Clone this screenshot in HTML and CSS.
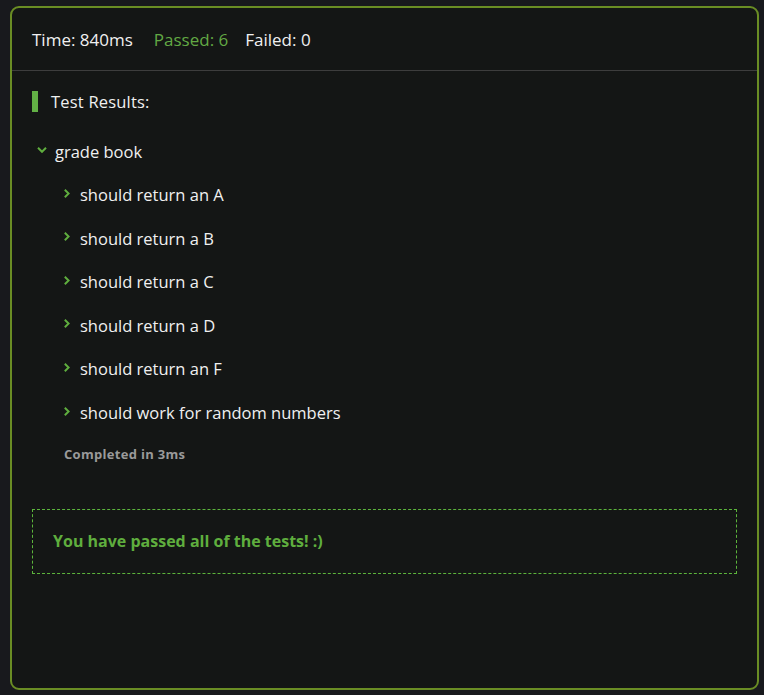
FILE: index.html
```html
<!DOCTYPE html>
<html>
<head>
<meta charset="utf-8">
<link rel="stylesheet" href="styles.css">
</head>
<body>
<div class="panel">
  <div class="header">
    <span class="stat time">Time: 840ms</span>
    <span class="stat passed">Passed: 6</span>
    <span class="stat">Failed: 0</span>
  </div>
  <div class="content">
    <div class="title">Test Results:</div>
    <div class="suite">
      <div class="suite-name">
        <svg class="chev-down" width="10" height="6" viewBox="0 0 10 6"><path d="M1 0.8 L5 4.8 L9 0.8" fill="none" stroke="#5fae3e" stroke-width="2"/></svg>
        <span>grade book</span>
      </div>
      <ul class="tests">
        <li><svg class="chev" width="6" height="9" viewBox="0 0 6 9"><path d="M0.8 0.8 L4.6 4.5 L0.8 8.2" fill="none" stroke="#5fae3e" stroke-width="2"/></svg>should return an A</li>
        <li><svg class="chev" width="6" height="9" viewBox="0 0 6 9"><path d="M0.8 0.8 L4.6 4.5 L0.8 8.2" fill="none" stroke="#5fae3e" stroke-width="2"/></svg>should return a B</li>
        <li><svg class="chev" width="6" height="9" viewBox="0 0 6 9"><path d="M0.8 0.8 L4.6 4.5 L0.8 8.2" fill="none" stroke="#5fae3e" stroke-width="2"/></svg>should return a C</li>
        <li><svg class="chev" width="6" height="9" viewBox="0 0 6 9"><path d="M0.8 0.8 L4.6 4.5 L0.8 8.2" fill="none" stroke="#5fae3e" stroke-width="2"/></svg>should return a D</li>
        <li><svg class="chev" width="6" height="9" viewBox="0 0 6 9"><path d="M0.8 0.8 L4.6 4.5 L0.8 8.2" fill="none" stroke="#5fae3e" stroke-width="2"/></svg>should return an F</li>
        <li><svg class="chev" width="6" height="9" viewBox="0 0 6 9"><path d="M0.8 0.8 L4.6 4.5 L0.8 8.2" fill="none" stroke="#5fae3e" stroke-width="2"/></svg>should work for random numbers</li>
      </ul>
      <div class="completed">Completed in 3ms</div>
    </div>
    <div class="success">You have passed all of the tests! :)</div>
  </div>
</div>
</body>
</html>
```
FILE: styles.css
```css
* { box-sizing: border-box; }
html, body { margin: 0; padding: 0; }
body {
  background: #18191d;
  font-family: "Open Sans", "Noto Sans", sans-serif;
  color: #f0f0f0;
  font-size: 16.5px;
}
.panel {
  margin: 6px 5px 0 10px;
  height: 684px;
  border: 2px solid #6a8d24;
  border-radius: 9px;
  background: #141615;
}
.header {
  height: 63px;
  padding-left: 20px;
  display: flex;
  align-items: center;
  border-bottom: 1px solid #3d3d3d;
  font-size: 17px;
}
.stat { margin-right: 17px; }
.time { margin-right: 21px; }
.passed { color: #62a944; }
.content { padding: 20px 20px 0 20px; }
.title {
  display: flex;
  align-items: center;
  height: 21px;
  border-left: 6px solid #62b045;
  padding-left: 13px;
  letter-spacing: 0.2px;
}
.suite { margin-top: 28px; padding-left: 5px; }
.suite-name { display: flex; align-items: center; height: 22px; }
.chev-down { margin-right: 8px; margin-top: -2px; }
.tests { list-style: none; margin: 0; padding: 0 0 0 27px; }
.tests li {
  display: flex;
  align-items: center;
  height: 22px;
  margin-top: 21.6px;
}
.chev { margin-right: 10px; margin-top: -3px; }
.completed {
  margin: 21px 0 0 27px;
  font-size: 13px;
  font-weight: 700;
  color: #9a9a9a;
  letter-spacing: 0.3px;
}
.success {
  margin-top: 46px;
  height: 65px;
  border: 1px dashed #5cb53c;
  display: flex;
  align-items: center;
  padding-left: 20px;
  color: #5fae3e;
  font-weight: 700;
  font-size: 16px;
}
```
